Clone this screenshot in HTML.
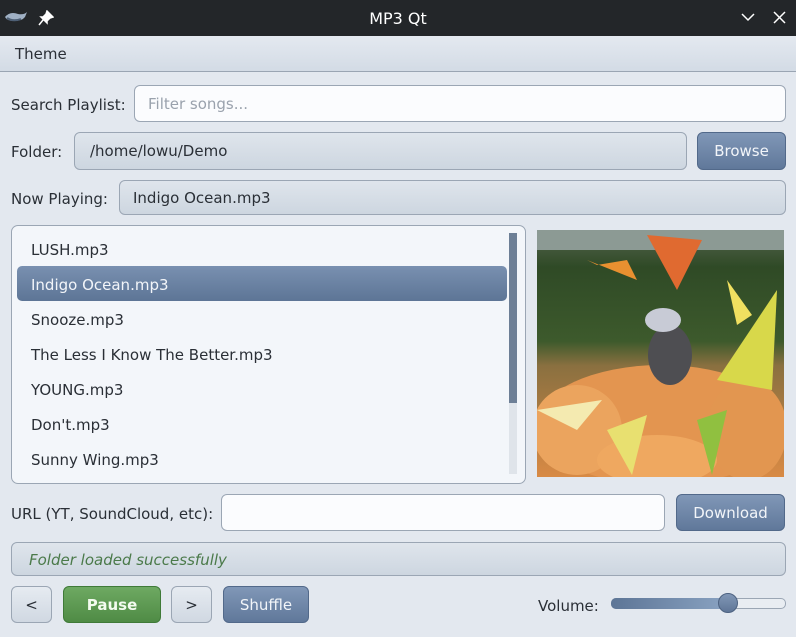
<!DOCTYPE html>
<html><head><style>
*{box-sizing:border-box;margin:0;padding:0}
body{width:796px;height:637px;overflow:hidden;background:#e3e8ef;font-family:"DejaVu Sans","Liberation Sans",sans-serif;font-size:15px;color:#2a2f36;position:relative}
.a{position:absolute}
.title{left:0;top:0;width:796px;height:36px;background:#232629;color:#fff}
.menu{left:0;top:36px;width:796px;height:36px;background:linear-gradient(#e4e9f0,#d3dbe5);border-bottom:1px solid #9aa5b3}
.lbl{white-space:nowrap}
.inp{border:1px solid #9ba6b4;border-radius:6px;background:#fbfcfe;padding-left:13px;line-height:36px;white-space:nowrap}
.ro{background:linear-gradient(#dfe5ec,#cdd6e0);border-color:#9ba6b4}
.btn{border:1px solid #52698a;border-radius:6px;background:linear-gradient(#8097b7,#60789a);color:#f2f5f9;text-align:center;white-space:nowrap}
.gb{border:1px solid #9ba6b4;border-radius:6px;background:linear-gradient(#e6ebf1,#d0d8e2);text-align:center}
.item{left:31px;white-space:nowrap}
</style></head><body>
<div class="a title">
  <svg class="a" style="left:4px;top:10px" width="24" height="14" viewBox="0 0 24 14"><path d="M1 7 Q6 1 14 4 Q20 5 23 2 L21 7 Q18 11 10 11 Q3 11 1 7Z" fill="#9fb0c4"/><path d="M3 8 Q9 12 17 9" stroke="#4d5f75" stroke-width="2" fill="none"/></svg>
  <svg class="a" style="left:38px;top:10px" width="16" height="16" viewBox="0 0 16 16"><path d="M9 1 L15 7 L12 8 L9 11 L9 13 L3 7 L5 7 L8 4Z M5 10 L1 15" fill="#fff" stroke="#fff" stroke-width="1.5"/></svg>
  <div class="a" style="left:0;width:796px;top:9px;text-align:center;font-size:16px">MP3 Qt</div>
  <svg class="a" style="left:741px;top:12px" width="14" height="10"><path d="M1 2 L7 8 L13 2" stroke="#fff" stroke-width="1.5" fill="none"/></svg>
  <svg class="a" style="left:773px;top:11px" width="13" height="13"><path d="M1 1 L12 12 M12 1 L1 12" stroke="#fff" stroke-width="1.5"/></svg>
</div>
<div class="a menu"><div class="a lbl" style="left:15px;top:9px">Theme</div></div>

<div class="a lbl" style="left:11px;top:96px">Search Playlist:</div>
<div class="a inp" style="left:134px;top:85px;width:652px;height:37px;color:#9aa2ad">Filter songs...</div>

<div class="a lbl" style="left:11px;top:143px">Folder:</div>
<div class="a inp ro" style="left:74px;top:132px;width:613px;height:38px;padding-left:15px">/home/lowu/Demo</div>
<div class="a btn" style="left:697px;top:132px;width:89px;height:38px;line-height:37px">Browse</div>

<div class="a lbl" style="left:11px;top:190px">Now Playing:</div>
<div class="a inp ro" style="left:119px;top:180px;width:667px;height:35px;line-height:35px">Indigo Ocean.mp3</div>

<div class="a" style="left:11px;top:225px;width:515px;height:259px;border:1px solid #9ba6b4;border-radius:7px;background:#f3f6fa"></div>
<div class="a" style="left:17px;top:266px;width:490px;height:35px;border-radius:5px;background:linear-gradient(#7990b0,#5d7596)"></div>
<div class="a item" style="top:241px">LUSH.mp3</div>
<div class="a item" style="top:276px;color:#f2f5f9">Indigo Ocean.mp3</div>
<div class="a item" style="top:311px">Snooze.mp3</div>
<div class="a item" style="top:346px">The Less I Know The Better.mp3</div>
<div class="a item" style="top:381px">YOUNG.mp3</div>
<div class="a item" style="top:416px">Don't.mp3</div>
<div class="a item" style="top:451px">Sunny Wing.mp3</div>
<div class="a" style="left:509px;top:233px;width:8px;height:241px;background:#dfe4ea"></div>
<div class="a" style="left:509px;top:233px;width:8px;height:170px;background:#6d7f96"></div>

<svg class="a" style="left:537px;top:230px" width="247" height="247" viewBox="0 0 247 247">
<defs><linearGradient id="g" x1="0" y1="0" x2="0" y2="1"><stop offset="0" stop-color="#55644f"/><stop offset="0.15" stop-color="#2f4a26"/><stop offset="0.45" stop-color="#3d5a2c"/><stop offset="0.55" stop-color="#8a7040"/><stop offset="1" stop-color="#d88a45"/></linearGradient></defs>
<rect width="247" height="247" fill="url(#g)"/>
<rect x="0" y="0" width="247" height="20" fill="#8c9a94"/>
<ellipse cx="124" cy="195" rx="125" ry="60" fill="#e39550"/>
<ellipse cx="40" cy="200" rx="45" ry="45" fill="#eba45e"/>
<ellipse cx="210" cy="200" rx="40" ry="50" fill="#e29650"/>
<ellipse cx="120" cy="230" rx="60" ry="25" fill="#efa860"/>
<path d="M50 30 L100 50 L90 30 L60 35Z" fill="#e89030"/><path d="M110 5 L140 60 L165 10Z" fill="#e06a30"/>
<path d="M190 50 L215 85 L200 95Z" fill="#f0e060"/><path d="M0 180 L65 170 L40 200Z" fill="#f4eab0"/>
<path d="M240 60 L180 150 L235 160Z" fill="#d8d84a"/>
<path d="M70 200 L110 185 L95 245Z" fill="#e8e070"/>
<path d="M160 190 L190 180 L175 245Z" fill="#90c040"/>
<ellipse cx="133" cy="125" rx="22" ry="30" fill="#4e4e52"/>
<ellipse cx="126" cy="90" rx="18" ry="12" fill="#c8cbd6"/>
</svg>

<div class="a lbl" style="left:11px;top:505px">URL (YT, SoundCloud, etc):</div>
<div class="a inp" style="left:221px;top:494px;width:444px;height:37px"></div>
<div class="a btn" style="left:676px;top:494px;width:109px;height:37px;line-height:37px">Download</div>

<div class="a inp ro" style="left:11px;top:542px;width:775px;height:34px;line-height:35px;padding-left:17px;color:#4b7a4a;font-style:italic">Folder loaded successfully</div>

<div class="a gb" style="left:11px;top:586px;width:41px;height:37px;line-height:37px">&lt;</div>
<div class="a" style="left:63px;top:586px;width:98px;height:37px;line-height:37px;border:1px solid #3f7a38;border-radius:6px;background:linear-gradient(#6ea962,#4f8b45);color:#f3fbef;text-align:center;font-weight:bold">Pause</div>
<div class="a gb" style="left:171px;top:586px;width:41px;height:37px;line-height:37px">&gt;</div>
<div class="a btn" style="left:223px;top:586px;width:86px;height:37px;line-height:37px">Shuffle</div>

<div class="a lbl" style="left:538px;top:597px">Volume:</div>
<div class="a" style="left:611px;top:598px;width:175px;height:11px;border:1px solid #9ba6b4;border-radius:5px;background:#e9edf2"></div>
<div class="a" style="left:611px;top:598px;width:118px;height:11px;border-radius:5px;background:linear-gradient(90deg,#5d7596,#8aa3c2)"></div>
<div class="a" style="left:718px;top:593px;width:20px;height:20px;border-radius:10px;border:1px solid #4d6281;background:linear-gradient(#8197b6,#5f7697)"></div>
</body></html>
